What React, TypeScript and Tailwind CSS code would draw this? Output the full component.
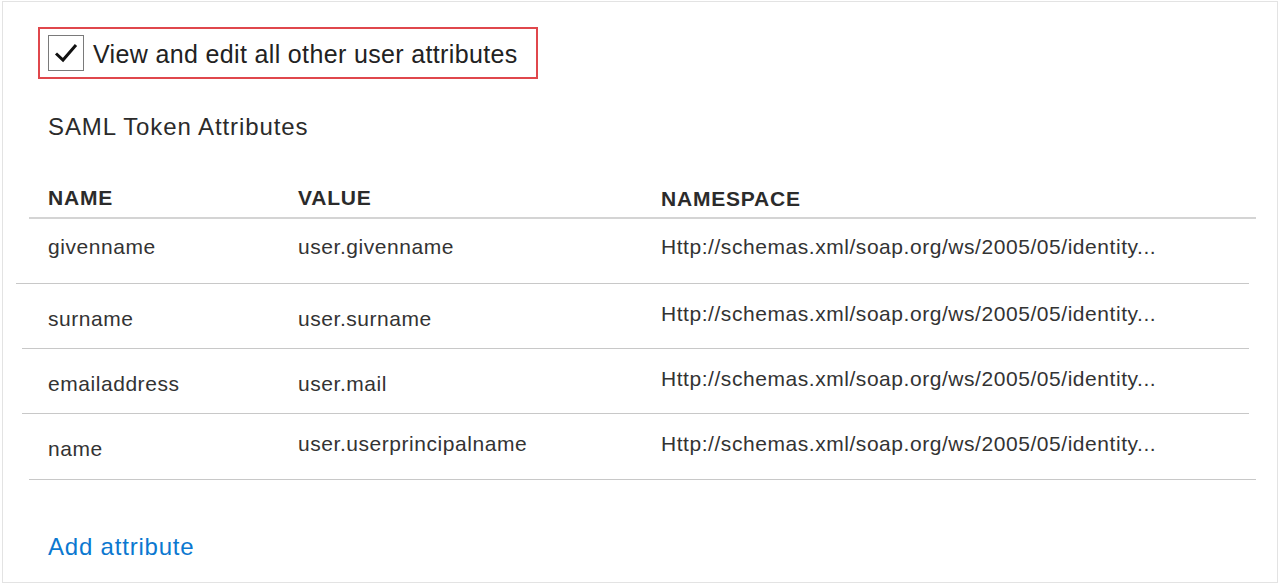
import React from "react";

const rows = [
  { name: "givenname", value: "user.givenname", nameOff: "pb-[8px]", valOff: "pb-[8px]", nsOff: "pb-[8px]" },
  { name: "surname", value: "user.surname", nameOff: "pt-[6px]", valOff: "pt-[6px]", nsOff: "pb-[4px]" },
  { name: "emailaddress", value: "user.mail", nameOff: "pt-[6px]", valOff: "pt-[6px]", nsOff: "pb-[4px]" },
  { name: "name", value: "user.userprincipalname", nameOff: "pt-[4px]", valOff: "pb-[6px]", nsOff: "pb-[6px]" },
];

export default function App() {
  return (
    <div
      className="w-[1280px] h-[585px] bg-white p-[1px] pl-[2px] pr-[2px] pb-[2px]"
      style={{ fontFamily: '"Liberation Sans", Arial, sans-serif' }}
    >
      <div className="w-full h-full border border-[#e3e3e3] bg-white flex flex-col">
        <div className="pt-[25px] pl-[35px]">
          <div className="w-[500px] h-[52px] border-2 border-[#e0474c] flex items-center pl-[8px]">
            <div className="w-[36px] h-[36px] border border-[#7a7a7a] flex items-center justify-center">
              <svg width="26" height="22" viewBox="0 0 26 22">
                <path d="M3 11.5 L10 18 L23 3" fill="none" stroke="#111" strokeWidth="3" />
              </svg>
            </div>
            <span className="ml-[9px] text-[25px] text-[#222] tracking-[0.35px] leading-[30px] pt-[2px]">View and edit all other user attributes</span>
          </div>
        </div>
        <div className="pl-[45px] mt-[34px] text-[24px] text-[#2b2b2b] leading-[28px] tracking-[0.9px]">SAML Token Attributes</div>
        <div className="ml-[26px] mr-[21px] mt-[38px]">
          <div className="h-[40px] border-b-2 border-[#d4d4d4] flex items-start text-[21px] font-bold text-[#2b2b2b] leading-[24px] tracking-[0.8px] pt-[7px]">
            <div className="w-[269px] pl-[19px]">NAME</div>
            <div className="w-[363px]">VALUE</div>
            <div className="pt-[1px]">NAMESPACE</div>
          </div>
          {rows.map((r, i) => (
            <div
              key={i}
              className={`flex items-center text-[21px] tracking-[0.55px] text-[#333] border-b border-[#c8c8c8] ${i === 0 ? "-ml-[13px] pl-[13px] mr-[7px]" : i === 3 ? "" : "-ml-[7px] pl-[7px] mr-[7px]"} ${i === 3 ? "h-[66px]" : "h-[65px]"}`}
            >
              <div className={`w-[269px] pl-[19px] ${r.nameOff}`}>{r.name}</div>
              <div className={`w-[363px] ${r.valOff}`}>{r.value}</div>
              <div className={`${r.nsOff}`}>Http://schemas.xml/soap.org/ws/2005/05/identity...</div>
            </div>
          ))}
        </div>
        <div className="pl-[45px] mt-[53px] text-[24px] text-[#0b78d0] leading-[28px] tracking-[0.8px]">Add attribute</div>
      </div>
    </div>
  );
}
